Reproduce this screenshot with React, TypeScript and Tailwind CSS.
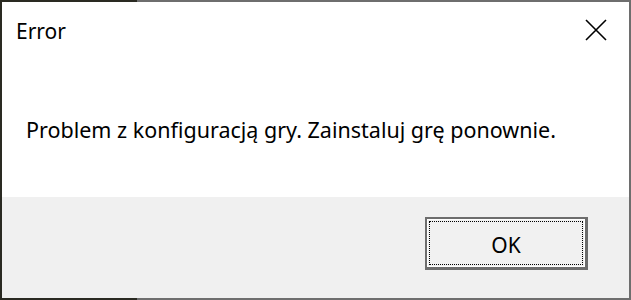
export default function App() {
  return (
    <div className="h-[300px] w-[631px] p-[2px] bg-[linear-gradient(to_right,#2a2a22_137px,#6e6e6e_137px)] font-['Noto_Sans',sans-serif] text-black">
      <div className="flex h-full w-full flex-col bg-white">
        {/* title bar */}
        <div className="flex items-start justify-between pl-[14px] pr-[22px] pt-[15px]">
          <span className="text-[21px] leading-[28px]">Error</span>
          <svg width="22" height="22" viewBox="0 0 22 22" className="mt-[2px]">
            <path d="M1 1 L21 21 M21 1 L1 21" stroke="#000" strokeWidth="1.6" fill="none" />
          </svg>
        </div>

        {/* message */}
        <div className="flex-1 pl-[24px] pt-[71px]">
          <p className="text-[21.5px] leading-[28px]">Problem z konfiguracją gry. Zainstaluj grę ponownie.</p>
        </div>

        {/* buttons */}
        <div className="flex h-[101px] justify-end bg-[#f0f0f0] pr-[41px] pt-[20px]">
          <button className="h-[53px] w-[163px] border-2 border-r-[3px] border-b-[3px] border-[#6d6d6d] bg-[#f1f1f1]">
            <div className="h-full w-full border border-white p-[1px]">
              <div className="flex h-full w-full items-center justify-center border border-dotted border-black pt-[3px] text-[21px] leading-[28px]">
                OK
              </div>
            </div>
          </button>
        </div>
      </div>
    </div>
  );
}
